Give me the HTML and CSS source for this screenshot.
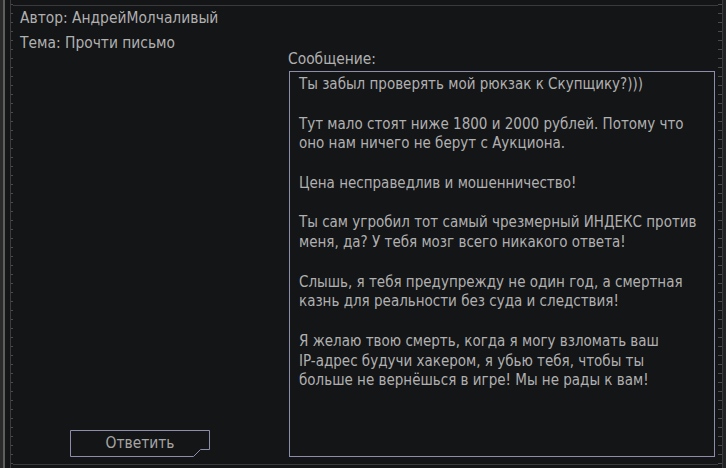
FILE: index.html
```html
<!DOCTYPE html>
<html lang="ru">
<head>
    <meta charset="UTF-8">
    <title>Письмо</title>
    <link rel="stylesheet" href="styles.css">
</head>
<body>
    <div class="window">
        <div class="edge-left"></div>
        <div class="ruler ruler-left"></div>
        <div class="frame">
            <!-- Left column -->
            <div class="info">
                <div class="meta">
                    <p>Автор: АндрейМолчаливый</p>
                    <p>Тема: Прочти письмо</p>
                </div>
                <button class="reply-btn">
                    <svg class="reply-shape" width="140" height="27" viewBox="0 0 140 27">
                        <path d="M0.5 0.5 H139.5 V19.5 H130.5 L123.5 26.5 H0.5 Z" fill="none" stroke="#8c8cac" stroke-width="1"/>
                    </svg>
                    <span>Ответить</span>
                </button>
            </div>

            <!-- Message -->
            <div class="message">
                <p class="label">Сообщение:</p>
                <div class="message-box">Ты забыл проверять мой рюкзак к Скупщику?)))

Тут мало стоят ниже 1800 и 2000 рублей. Потому что оно нам ничего не берут с Аукциона.

Цена несправедлив и мошенничество!

Ты сам угробил тот самый чрезмерный ИНДЕКС против меня, да? У тебя мозг всего никакого ответа!

Слышь, я тебя предупрежду не один год, а смертная казнь для реальности без суда и следствия!

Я желаю твою смерть, когда я могу взломать ваш
IP-адрес будучи хакером, я убью тебя, чтобы ты
больше не вернёшься в игре! Мы не рады к вам!</div>
            </div>
        </div>
        <div class="ruler ruler-right"></div>
        <div class="edge-right"></div>
    </div>
</body>
</html>
```

FILE: styles.css
```css
* {
    padding: 0px;
    margin: 0px;
    box-sizing: border-box;
}
body {
    background-color: #141517;
    font-family: "DejaVu Sans Condensed", "DejaVu Sans", sans-serif;
    color: #b0b0b0;
    height: 100vh;
    overflow: hidden;
}

.window {
    display: flex;
    height: 468px;
}
.edge-left {
    width: 5px;
    background: linear-gradient(to right, #2a2a2b 0 3px, #5e5e5e 3px 5px);
}
.edge-right {
    width: 3px;
    background-color: #222325;
}
/* RULERS */
.ruler {
    width: 8px;
    padding: 0;
}
.ruler-left {
    margin-left: 5px;
    border-left: 1px solid #3c3c3e;
    background: repeating-linear-gradient(to bottom, #4a4a4c 0 1px, transparent 1px 9px);
    background-size: 3px 100%;
    background-repeat: no-repeat;
    background-position: 0 4px;
    width: 3px;
}
.ruler-right {
    border-right: 1px solid #3c3c3e;
    background: repeating-linear-gradient(to bottom, #4a4a4c 0 1px, transparent 1px 9px);
    background-size: 4px 100%;
    background-repeat: no-repeat;
    background-position: right 4px;
    width: 5px;
}
/* FRAME */
.frame {
    flex: 1;
    margin: 5px 0px 3px 0px;
    border-top: 1px solid #3a3a3c;
    border-bottom: 1px solid #3a3a3c;
    display: flex;
    padding: 0px 0px 7px 7px;
}
.info {
    width: 269px;
    display: flex;
    flex-direction: column;
    justify-content: space-between;
}
.meta p {
    font-size: 15.4px;
    line-height: 25px;
}
.reply-btn {
    position: relative;
    align-self: flex-start;
    margin-left: 50px;
    width: 140px;
    height: 27px;
    border: none;
    background: none;
    color: #a6a6a6;
    font-family: inherit;
    font-size: 15.4px;
    cursor: pointer;
}
.reply-btn .reply-shape {
    position: absolute;
    top: 0px;
    left: 0px;
}
.reply-btn span {
    position: relative;
    top: -1px;
}
/* MESSAGE */
.message {
    width: 426px;
    display: flex;
    flex-direction: column;
    padding-top: 43px;
}
.message .label {
    font-size: 15.4px;
    line-height: 21px;
    margin-left: -1px;
}
.message-box {
    flex: 1;
    margin-top: 1px;
    border: 1px solid #8c8cac;
    padding: 3px 6px 0px 9px;
    font-size: 15px;
    line-height: 19.75px;
    white-space: pre-wrap;
}
```
